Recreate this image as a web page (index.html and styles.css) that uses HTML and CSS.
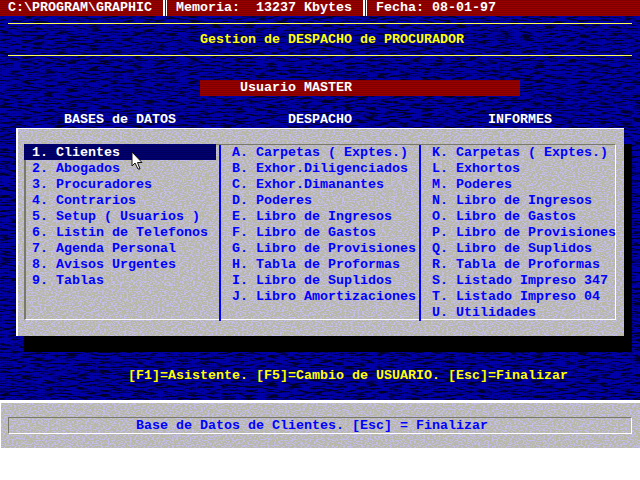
FILE: index.html
```html
<!DOCTYPE html>
<html lang="es">
<head>
<meta charset="utf-8">
<title>Gestion de DESPACHO de PROCURADOR</title>
<link rel="stylesheet" href="styles.css">
</head>
<body>
<svg class="defs" width="0" height="0" aria-hidden="true">
  <filter id="grain" x="0" y="0" width="100%" height="100%" color-interpolation-filters="sRGB">
    <feTurbulence type="fractalNoise" baseFrequency="0.09 0.6" numOctaves="4" seed="7"/>
    <feColorMatrix type="matrix" values="0 0 0 0 0  0 0 0 0 0  0 0 0 0 0.16  4.5 0 0 0 -2.05"/>
  </filter>
  <filter id="speck" x="0" y="0" width="100%" height="100%" color-interpolation-filters="sRGB">
    <feTurbulence type="fractalNoise" baseFrequency="0.45 0.8" numOctaves="2" seed="3"/>
    <feColorMatrix type="matrix" values="0 0 0 0 0.76  0 0 0 0 0.74  0 0 0 0 0.92  6 0 0 0 -2.7"/>
  </filter>
</svg>
<div class="screen">
  <div class="noise"></div>
  <header class="topbar">C:\PROGRAM\GRAPHIC <span class="sep"></span> Memoria:  13237 Kbytes <span class="sep"></span> Fecha: 08-01-97</header>
  <div class="title">Gestion de DESPACHO de PROCURADOR</div>
  <div class="user">Usuario MASTER</div>
  <div class="heads">
    <span>BASES de DATOS</span>
    <span>DESPACHO</span>
    <span>INFORMES</span>
  </div>
  <main class="panel">
    <div class="speck"></div>
    <div class="menu">
      <ul class="col">
        <li class="sel"><b>1.</b>Clientes</li>
        <li><b>2.</b>Abogados</li>
        <li><b>3.</b>Procuradores</li>
        <li><b>4.</b>Contrarios</li>
        <li><b>5.</b>Setup ( Usuarios )</li>
        <li><b>6.</b>Listin de Telefonos</li>
        <li><b>7.</b>Agenda Personal</li>
        <li><b>8.</b>Avisos Urgentes</li>
        <li><b>9.</b>Tablas</li>
      </ul>
      <ul class="col">
        <li><b>A.</b>Carpetas ( Exptes.)</li>
        <li><b>B.</b>Exhor.Diligenciados</li>
        <li><b>C.</b>Exhor.Dimanantes</li>
        <li><b>D.</b>Poderes</li>
        <li><b>E.</b>Libro de Ingresos</li>
        <li><b>F.</b>Libro de Gastos</li>
        <li><b>G.</b>Libro de Provisiones</li>
        <li><b>H.</b>Tabla de Proformas</li>
        <li><b>I.</b>Libro de Suplidos</li>
        <li><b>J.</b>Libro Amortizaciones</li>
      </ul>
      <ul class="col">
        <li><b>K.</b>Carpetas ( Exptes.)</li>
        <li><b>L.</b>Exhortos</li>
        <li><b>M.</b>Poderes</li>
        <li><b>N.</b>Libro de Ingresos</li>
        <li><b>O.</b>Libro de Gastos</li>
        <li><b>P.</b>Libro de Provisiones</li>
        <li><b>Q.</b>Libro de Suplidos</li>
        <li><b>R.</b>Tabla de Proformas</li>
        <li><b>S.</b>Listado Impreso 347</li>
        <li><b>T.</b>Listado Impreso 04</li>
        <li><b>U.</b>Utilidades</li>
      </ul>
    </div>
  </main>
  <div class="keys">[F1]=Asistente. [F5]=Cambio de USUARIO. [Esc]=Finalizar</div>
  <footer class="status">
    <div class="speck"></div>
    <div class="status-box">Base de Datos de Clientes. [Esc] = Finalizar</div>
  </footer>
  <svg class="cursor" width="13" height="19" viewBox="0 0 13 19" aria-hidden="true">
    <path d="M1 1V15L4 12L7 18H9L6.5 11.5H11Z" fill="#fff" stroke="#111" stroke-width="1"/>
  </svg>
</div>
</body>
</html>
```

FILE: styles.css
```css
* { box-sizing: border-box; }
html, body { margin: 0; padding: 0; background: #fff; }
.defs { position: absolute; }
.screen {
  position: relative;
  width: 640px;
  height: 480px;
  overflow: hidden;
  background: #fff;
  font: bold 13.33px/16px "Liberation Mono", monospace;
}
.topbar, .title, .user, .keys, .status-box, .col li { white-space: pre; }
.noise {
  position: absolute;
  left: 0; top: 0;
  width: 640px;
  height: 400px;
  background: #000;
  filter: url(#grain);
}
.screen::before {
  content: "";
  position: absolute;
  left: 0; top: 0;
  width: 640px;
  height: 400px;
  background: repeating-linear-gradient(90deg, #0000ac 0 1px, #000088 1px 2px);
}
.topbar, .title, .user, .heads, .panel, .keys, .status { position: relative; }
.topbar {
  height: 16px;
  margin-bottom: 7px;
  padding-left: 8px;
  color: #fff;
  background: repeating-linear-gradient(180deg, #800000 0 1px, #980000 1px 2px);
}
.sep {
  display: inline-block;
  width: 8px;
  height: 16px;
  vertical-align: top;
  background: linear-gradient(90deg, transparent 0 3px, #fff 3px 5px, transparent 5px 6px, #fff 6px 7px, transparent 7px);
}
.title {
  height: 33px;
  margin: 0 8px;
  padding-left: 192px;
  color: #ffff00;
  line-height: 31px;
  border-top: 1px solid #ffff50;
  border-bottom: 1px solid #ffff50;
}
.user {
  width: 320px;
  height: 16px;
  margin: 24px 0 0 200px;
  padding-left: 40px;
  color: #fff;
  background: repeating-linear-gradient(180deg, #800000 0 1px, #980000 1px 2px);
}
.heads {
  display: grid;
  grid-template-columns: 224px 200px 1fr;
  height: 16px;
  margin-top: 16px;
  padding-left: 64px;
  color: #fff;
}
.panel {
  width: 608px;
  height: 208px;
  margin: 0 0 0 16px;
  padding: 16px 8px;
  background: #b8b8a4;
  border-top: 1px solid #fff;
  border-left: 2px solid #fff;
  box-shadow: 8px 16px 0 #000;
}
.speck {
  position: absolute;
  inset: 0;
  filter: url(#speck);
}
.menu {
  position: relative;
  display: grid;
  grid-template-columns: 195px 200px 1fr;
  height: 176px;
  margin-top: -1px;
  margin-left: -2px;
  border-right: 1px solid #fff;
  border-bottom: 1px solid #fff;
  border-top: 1px solid #78786c;
  border-left: 2px solid #78786c;
}
.col {
  list-style: none;
  margin: 0;
  padding: 0;
  color: #0000ff;
  border-right: 2px solid #0000ff;
}
.col:last-child { border-right: 0; }
.col:nth-child(n+2) { padding-left: 11px; }
.col li { height: 16px; padding-left: 6px; }
.col:nth-child(n+2) li { padding-left: 0; }
.col b { display: inline-block; width: 24px; }
.col .sel {
  height: 15px;
  margin: 0 3px 1px -2px;
  padding-left: 8px;
  color: #fff;
  background: repeating-linear-gradient(180deg, #000070 0 1px, #00005c 1px 2px);
  box-shadow: 0 -1px 0 #000070;
}
.keys {
  height: 16px;
  margin-top: 32px;
  padding-left: 128px;
  color: #ffff00;
}
.status {
  height: 47px;
  margin: 17px 0 0 1px;
  padding: 16px 8px 16px 7px;
  background: #b8b8a4;
  border-top: 2px solid #fff;
}
.status-box {
  position: relative;
  height: 17px;
  margin-top: -2px;
  padding-left: 127px;
  color: #0000ff;
  line-height: 16px;
  border-top: 1px solid #78786c;
  border-left: 1px solid #78786c;
  border-right: 1px solid #fff;
  border-bottom: 1px solid #fff;
}
.cursor { position: absolute; left: 131px; top: 151px; }
```
